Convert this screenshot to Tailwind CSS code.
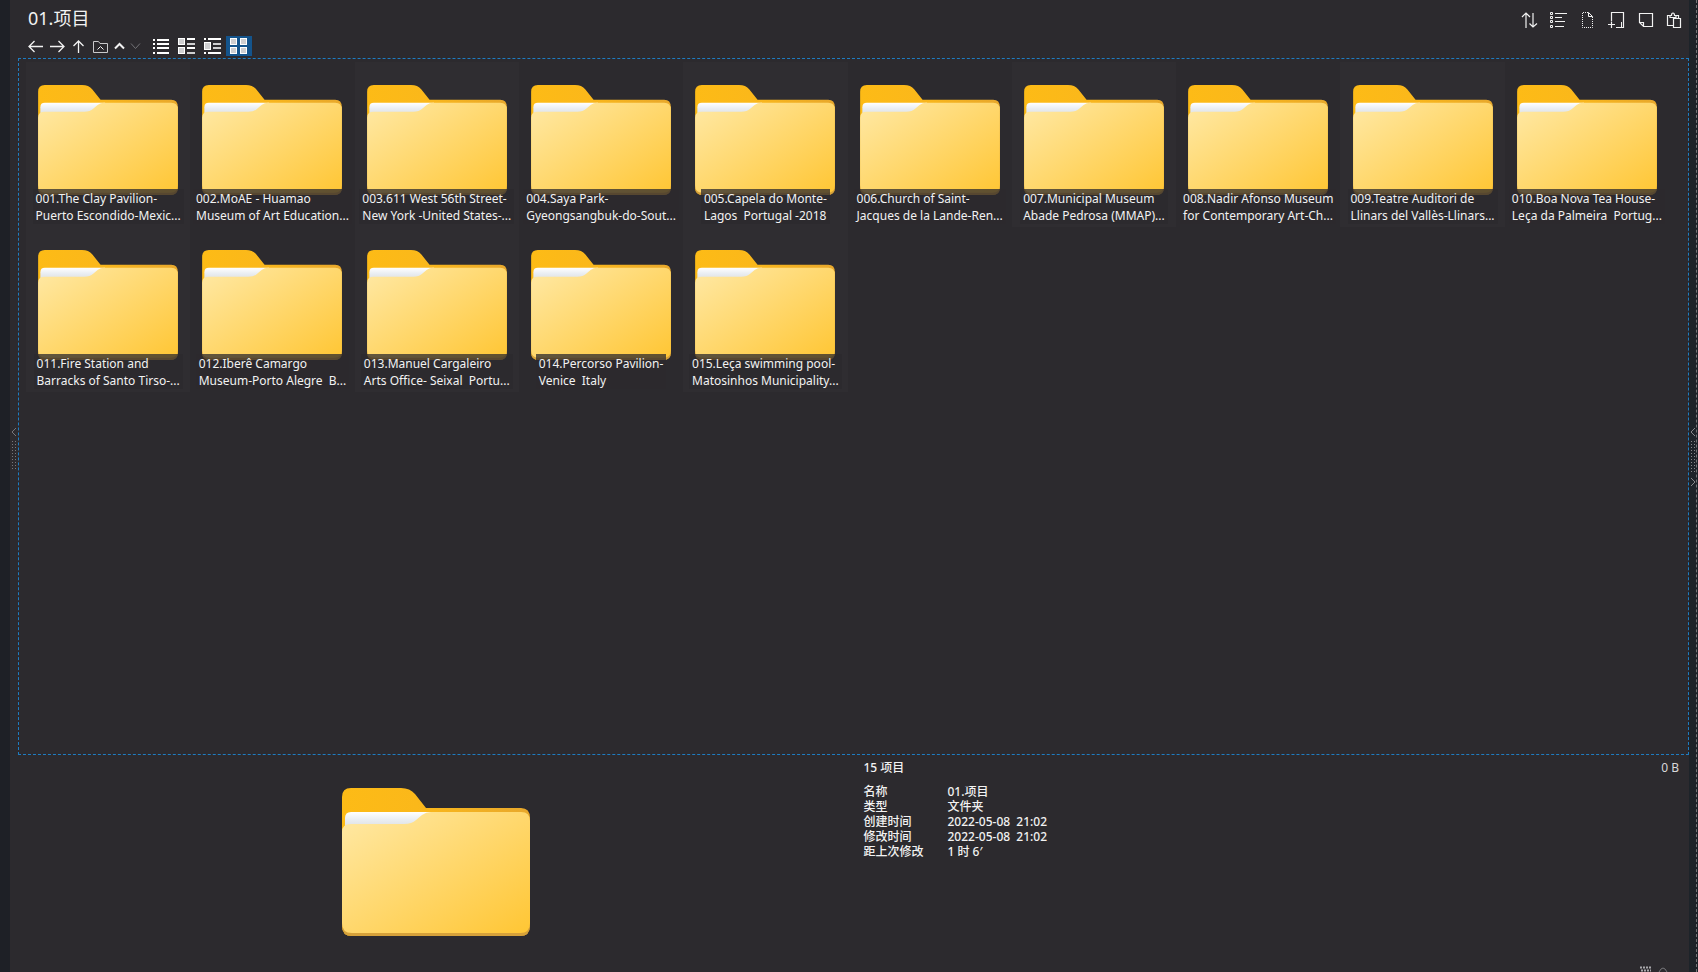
<!DOCTYPE html>
<html lang="zh-CN">
<head>
<meta charset="utf-8">
<title>01.项目</title>
<script src="https://cdn.jsdelivr.net/npm/@tailwindcss/browser@4"></script>
</head>
<body class="flex h-screen overflow-hidden bg-[#2c2a2e] font-['Noto_Sans','Noto_Sans_CJK_SC',sans-serif] text-[#f2f2f2]">
<svg class="absolute size-0" aria-hidden="true">
  <defs>
    <linearGradient id="front" x1="0" y1="0" x2="1" y2="1"><stop offset="0" stop-color="#ffe9a6"/><stop offset="1" stop-color="#ffc634"/></linearGradient>
    <linearGradient id="paper" x1="0" y1="0" x2="0" y2="1"><stop offset="0" stop-color="#ffffff"/><stop offset="0.4" stop-color="#e9edf2"/><stop offset="1" stop-color="#d9d9d4"/></linearGradient>
    <linearGradient id="back" x1="0" y1="0" x2="1" y2="0"><stop offset="0" stop-color="#fdbb16"/><stop offset="0.4" stop-color="#fbb81a"/><stop offset="1" stop-color="#e8a82c"/></linearGradient>
    <symbol id="folder" viewBox="0 0 188 148">
      <path fill="url(#back)" d="M0 9Q0 0 9 0H59Q68 0 73 6L84 20H179Q188 20 188 30V138Q188 148 178 148H10Q0 148 0 138Z"/>
      <path fill="url(#paper)" d="M3 30Q3 24 9 24H90V44H3Z"/>
      <path fill="#d6a13a" d="M0 120H188V138Q188 148 178 148H10Q0 148 0 138Z"/>
      <path fill="url(#front)" d="M0 44Q0 36 9 36H62Q70 36 74 32L80 27Q84 24 89 24H179Q188 24 188 33V135Q188 145 178 145H10Q0 145 0 135Z"/>
    </symbol>
  </defs>
</svg>

<div class="w-[10px] shrink-0 bg-[#1e2026]"></div>
<div class="flex w-2 shrink-0 flex-col items-center pt-[427px]" role="separator" aria-label="左侧面板">
  <svg class="h-11 w-2" viewBox="0 0 8 44" fill="none" stroke="#77767a"><path d="M6 1L2 5L6 9"/><path stroke-dasharray="1 2" d="M2.500 14V44M5.500 14V44"/></svg>
</div>

<main class="flex min-w-0 grow flex-col">
  <header class="flex h-[58px] shrink-0 items-start justify-between pl-[10px] pr-[6px]">
    <div class="flex flex-col">
      <h1 class="h-9 pt-1 text-[18px] leading-7">01.项目</h1>
      <nav class="flex h-5 items-center text-[#f2f2f2]">
        <button aria-label="后退" class="mr-[7px]"><svg width="15" height="13" viewBox="0 0 15 13" fill="none" stroke="currentColor" stroke-width="1.3"><path d="M15 6.500H1M6.500 1L1 6.500L6.500 12"/></svg></button>
        <button aria-label="前进" class="mr-2"><svg width="15" height="13" viewBox="0 0 15 13" fill="none" stroke="currentColor" stroke-width="1.3"><path d="M0 6.500H14M8.500 1L14 6.500L8.500 12"/></svg></button>
        <button aria-label="向上" class="mr-2"><svg width="12" height="13" viewBox="0 0 12 13" fill="none" stroke="currentColor" stroke-width="1.3"><path d="M5.500 13V1M0.500 6L5.500 1L10.500 6"/></svg></button>
        <button aria-label="文件夹" class="mr-[6px]"><svg width="15" height="13" viewBox="0 0 15 13" fill="none" stroke="#c9c9cb"><path d="M.5 1.500H5.500L7 3.500H14.500V12.500H.5Z"/><path stroke="#f2f2f2" d="M4.500 9.500L7.500 6.500L10.500 9.500"/></svg></button>
        <button aria-label="上一个" class="mr-[5px]"><svg width="11" height="8" viewBox="0 0 11 8" fill="none" stroke="currentColor" stroke-width="2"><path d="M1 6.500L5.500 2L10 6.500"/></svg></button>
        <button aria-label="下一个" class="mr-3 text-[#727175]"><svg width="11" height="8" viewBox="0 0 11 8" fill="none" stroke="currentColor"><path d="M1 1.500L5.500 6.500L10 1.500"/></svg></button>
        <button aria-label="列表" class="mr-[9px]"><svg width="16" height="15" viewBox="0 0 16 15" fill="#fff"><path d="M0 0h2v2H0zM0 4h2v2H0zM0 8h2v2H0zM0 13h2v2H0zM4 0h12v2H4zM4 4h12v2H4zM4 8h12v2H4zM4 13h12v2H4z"/></svg></button>
        <button aria-label="详细信息" class="mr-[9px]"><svg width="17" height="16" viewBox="0 0 17 16"><path fill="#fff" d="M0 0h7v7H0zM0 9h7v7H0zM9 0h8v2H9zM9 9h8v2H9z"/><path fill="#cfcfd1" d="M1 1h5v5H1zM1 10h5v5H1zM9 5h8v2H9zM9 14h8v2H9z"/></svg></button>
        <button aria-label="内容" class="mr-[5px]"><svg width="17" height="16" viewBox="0 0 17 16"><path fill="#fff" d="M0 0h2v2H0zM4 0h13v2H4zM0 4h7v8H0zM0 14h2v2H0zM4 14h13v2H4z"/><path fill="#cfcfd1" d="M1 5h5v6H1zM9 5h8v2H9zM9 9h8v2H9z"/></svg></button>
        <button aria-label="缩略图" aria-pressed="true" class="flex h-5 w-[26px] items-center pl-1 bg-[#14548c]"><svg width="17" height="16" viewBox="0 0 17 16"><path fill="#fff" d="M0 0h7v7H0zM10 0h7v7H10zM0 9h7v7H0zM10 9h7v7H10z"/><path fill="#cfcfd1" d="M1 1h5v5H1zM11 1h5v5H11zM1 10h5v5H1zM11 10h5v5H11z"/></svg></button>
      </nav>
    </div>
    <div class="flex gap-3 pt-3">
      <button aria-label="排序"><svg width="17" height="17" viewBox="0 0 17 17" fill="none" stroke="#f2f2f2" stroke-width="1.2"><path d="M5 16V1M1 5L5 1L9 5M12 1V15M8.500 11.500L12 15L16 11.500"/></svg></button>
      <button aria-label="选择"><svg width="17" height="17" viewBox="0 0 17 17" fill="none" stroke="#f2f2f2"><path d="M.5.5h2v2h-2zM.5 4.500h2v2h-2zM.5 8.500h2v2h-2zM.5 13.500h2v2h-2zM5 1.500H17M5 5.500H12M5 9.500H15M5 14.500H14"/></svg></button>
      <button aria-label="新建文件"><svg width="17" height="17" viewBox="0 0 17 17" fill="none" stroke="#f2f2f2"><path stroke-dasharray="1 1" d="M9 .5H3.500V15.500H13.500V5"/><path d="M9.500 .5V4.500H13.500Z"/></svg></button>
      <button aria-label="新建"><svg width="17" height="17" viewBox="0 0 17 17" fill="none" stroke="#f2f2f2"><path stroke-width="1.200" d="M3.500 9V.5H15.500V15.500H8M3.500 9.500V16M0 12.500H7"/><path d="M13.500 10V15.500"/></svg></button>
      <button aria-label="便签"><svg width="17" height="17" viewBox="0 0 17 17" fill="none" stroke="#f2f2f2" stroke-width="1.200"><path d="M2.500 1.500H15.500V14.500H6.500L2.500 10.500ZM2.500 10.500H6.500V14.500"/></svg></button>
      <button aria-label="粘贴"><svg width="17" height="17" viewBox="0 0 17 17" fill="none" stroke="#f2f2f2" stroke-width="1.200"><path d="M7 13.500H1.500V3.500H4V5.500H10V3.500H12.500V6M4 3.500H5.500Q5.500 1 7 1Q8.500 1 8.500 3.500H10M7.500 6.500H14.500V15.500H7.500Z"/></svg></button>
    </div>
  </header>

  <section class="min-h-0 grow border border-dashed border-[#1f7cc0] pl-[7px] pr-[19px] pt-[3px]" aria-label="文件">
    <ul id="files" class="grid grid-cols-10"></ul>
  </section>

  <footer class="grid h-[217px] shrink-0 grid-cols-2">
    <div class="flex items-start justify-center pt-[33px]">
      <svg class="h-[148px] w-[188px]" role="img" aria-label="文件夹"><use href="#folder"/></svg>
    </div>
    <div class="flex justify-between pl-[10px] pr-[10px] pt-[5px] text-xs font-medium">
      <div>
        <p class="leading-4">15 项目</p>
        <dl class="mt-2 grid grid-cols-[84px_auto] leading-[15px] whitespace-pre">
          <dt>名称</dt><dd>01.项目</dd>
          <dt>类型</dt><dd>文件夹</dd>
          <dt>创建时间</dt><dd>2022-05-08  21:02</dd>
          <dt>修改时间</dt><dd>2022-05-08  21:02</dd>
          <dt>距上次修改</dt><dd>1 时 6′</dd>
        </dl>
      </div>
      <div class="flex flex-col items-end justify-between">
        <p class="font-normal leading-4 text-[#d8d8da]">0 B</p>
        <svg width="40" height="6" viewBox="0 0 40 6" fill="none" stroke="#a9a8ac"><path stroke-width="2" stroke-dasharray="2 1" d="M1 1.500H12M2 4.500H12"/><path stroke="#77767a" d="M20 6Q24 -2 28 6"/></svg>
      </div>
    </div>
  </footer>
</main>

<div class="flex w-[9px] shrink-0 bg-[#1d2329]">
  <svg class="mt-[427px] h-[60px] w-[7px]" viewBox="0 0 7 60" fill="none" stroke="#85868a"><path d="M6 1L2 5L6 9M2 51L6 55L2 59"/><path stroke-dasharray="1 2" d="M2.500 14V46M5.500 14V46"/></svg>
  <div class="h-full border-r border-dashed border-[#77767a]"></div>
</div>

<template id="tile">
  <li class="odd:bg-[#2f2d31]">
    <button class="flex h-[165px] w-full flex-col items-center pt-[23px]">
      <svg class="h-[110px] w-[140px] shrink-0" aria-hidden="true"><use href="#folder"/></svg>
      <span class="relative -mt-[6px] bg-[#2c2a2e]/75 px-[3px] pt-px text-left text-xs leading-[17px] whitespace-pre"></span>
    </button>
  </li>
</template>
<script>
const names = [
  "001.The Clay Pavilion-\nPuerto Escondido-Mexic...",
  "002.MoAE - Huamao\nMuseum of Art Education...",
  "003.611 West 56th Street-\nNew York -United States-...",
  "004.Saya Park-\nGyeongsangbuk-do-Sout...",
  "005.Capela do Monte-\nLagos  Portugal -2018",
  "006.Church of Saint-\nJacques de la Lande-Ren...",
  "007.Municipal Museum\nAbade Pedrosa (MMAP)...",
  "008.Nadir Afonso Museum\nfor Contemporary Art-Ch...",
  "009.Teatre Auditori de\nLlinars del Vallès-Llinars...",
  "010.Boa Nova Tea House-\nLeça da Palmeira  Portug...",
  "011.Fire Station and\nBarracks of Santo Tirso-...",
  "012.Iberê Camargo\nMuseum-Porto Alegre  B...",
  "013.Manuel Cargaleiro\nArts Office- Seixal  Portu...",
  "014.Percorso Pavilion-\nVenice  Italy",
  "015.Leça swimming pool-\nMatosinhos Municipality..."
];
const list = document.getElementById("files"), tile = document.getElementById("tile");
for (const name of names) {
  const node = tile.content.cloneNode(true);
  node.querySelector("span").textContent = name;
  list.append(node);
}
</script>
</body>
</html>
